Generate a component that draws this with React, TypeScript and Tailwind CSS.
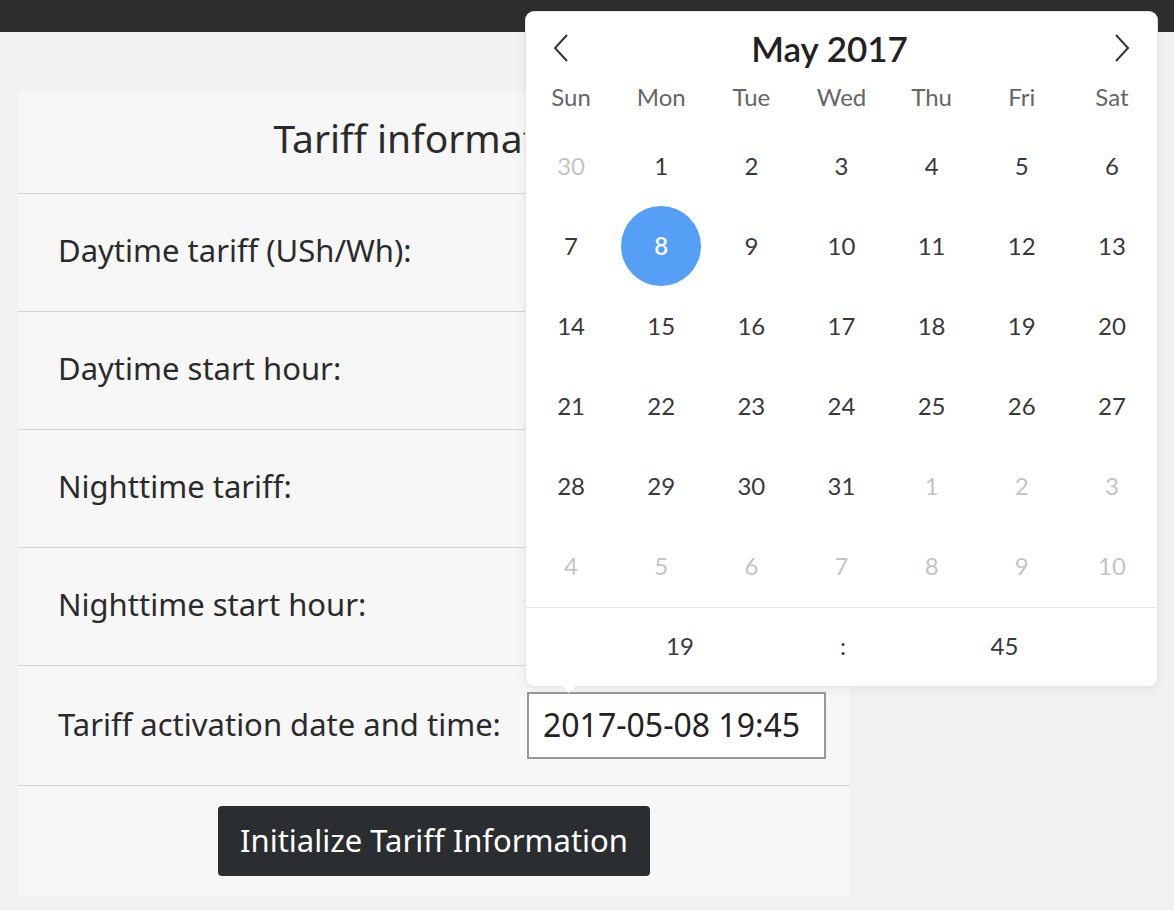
import React from "react";

const pageFont = { fontFamily: "'Noto Sans', sans-serif" };
const calFont = { fontFamily: "Lato, 'Noto Sans', sans-serif" };

const rows = [
  "Daytime tariff (USh/Wh):",
  "Daytime start hour:",
  "Nighttime tariff:",
  "Nighttime start hour:",
];

const weeks = [
  [30, 1, 2, 3, 4, 5, 6],
  [7, 8, 9, 10, 11, 12, 13],
  [14, 15, 16, 17, 18, 19, 20],
  [21, 22, 23, 24, 25, 26, 27],
  [28, 29, 30, 31, 1, 2, 3],
  [4, 5, 6, 7, 8, 9, 10],
];

function Calendar() {
  return (
    <div
      style={calFont}
      className="absolute left-[526px] top-[12px] w-[631px] rounded-lg bg-white shadow-[0_0_0_1px_#e6e6e6,0_3px_13px_rgba(0,0,0,0.08)]"
    >
      <div className="flex h-[72px] items-center justify-between px-[26px]">
        <svg width="18" height="30" viewBox="0 0 18 30" fill="none" stroke="#333" strokeWidth="2">
          <path d="M15 2 L3 15 L15 28" />
        </svg>
        <span className="mr-[24px] text-[35px] font-semibold text-[#222]">May 2017</span>
        <svg width="18" height="30" viewBox="0 0 18 30" fill="none" stroke="#333" strokeWidth="2">
          <path d="M3 2 L15 15 L3 28" />
        </svg>
      </div>
      <div className="grid grid-cols-7 text-center text-[24px] text-[#666]">
        {["Sun", "Mon", "Tue", "Wed", "Thu", "Fri", "Sat"].map((d) => (
          <span key={d} className="leading-[26px]">{d}</span>
        ))}
      </div>
      <div className="grid grid-cols-7 pt-[16px] pb-[1px] text-[24px]">
        {weeks.map((w, wi) =>
          w.map((d, di) => {
            const muted = (wi === 0 && d > 20) || (wi >= 4 && d < 15);
            const selected = wi === 1 && d === 8;
            return (
              <div key={`${wi}-${di}`} className="flex h-[80px] items-center justify-center">
                {selected ? (
                  <span className="flex h-[80px] w-[80px] items-center justify-center rounded-full bg-[#569ff7] font-semibold text-white">
                    {d}
                  </span>
                ) : (
                  <span className={muted ? "text-[#c4c4c4]" : "text-[#393939]"}>{d}</span>
                )}
              </div>
            );
          })
        )}
      </div>
      <div className="flex h-[79px] items-center border-t border-[#e6e6e6] pb-[2px] text-[24px] text-[#393939]">
        <span className="w-[308px] text-center">19</span>
        <span className="w-[18px] text-center">:</span>
        <span className="w-[305px] text-center">45</span>
      </div>
      <div className="absolute left-[36px] bottom-[-7px] h-0 w-0 border-x-[7px] border-t-[7px] border-x-transparent border-t-white" />
    </div>
  );
}

export default function App() {
  return (
    <div style={pageFont} className="relative min-h-[910px] w-[1174px] overflow-hidden bg-[#f2f2f2]">
      <div className="h-[32px] bg-[#2e2e2e]" />
      <div className="ml-[18px] mt-[60px] w-[832px] bg-[#f7f7f7]">
        <div className="flex h-[101px] items-center justify-center pb-[8px] text-[39px] text-[#2b2b2b]">
          Tariff information
        </div>
        {rows.map((r) => (
          <div key={r} className="flex h-[118px] items-center border-t border-[#d4d4d4] pl-[40px] text-[31px] text-[#2b2b2b]">
            <span className="w-[469px] pb-[4px]">{r}</span>
            <input readOnly className="h-[67px] w-[298px] border border-[#999] bg-white px-[16px] text-[31px]" />
          </div>
        ))}
        <div className="flex h-[120px] items-center border-t border-[#d4d4d4] pl-[40px] text-[31px] text-[#2b2b2b]">
          <span className="w-[469px] pb-[3px]">Tariff activation date and time:</span>
          <div className="flex h-[67px] w-[299px] items-center border-2 border-[#999] bg-white px-[14px] pb-[2px] text-[32px] text-[#222]">
            2017-05-08 19:45
          </div>
        </div>
        <div className="flex h-[111px] items-center justify-center border-t border-[#d4d4d4]">
          <button className="h-[70px] w-[432px] rounded-[4px] bg-[#2b2e30] pb-[2px] text-[31px] text-white">
            Initialize Tariff Information
          </button>
        </div>
      </div>
      <Calendar />
    </div>
  );
}
